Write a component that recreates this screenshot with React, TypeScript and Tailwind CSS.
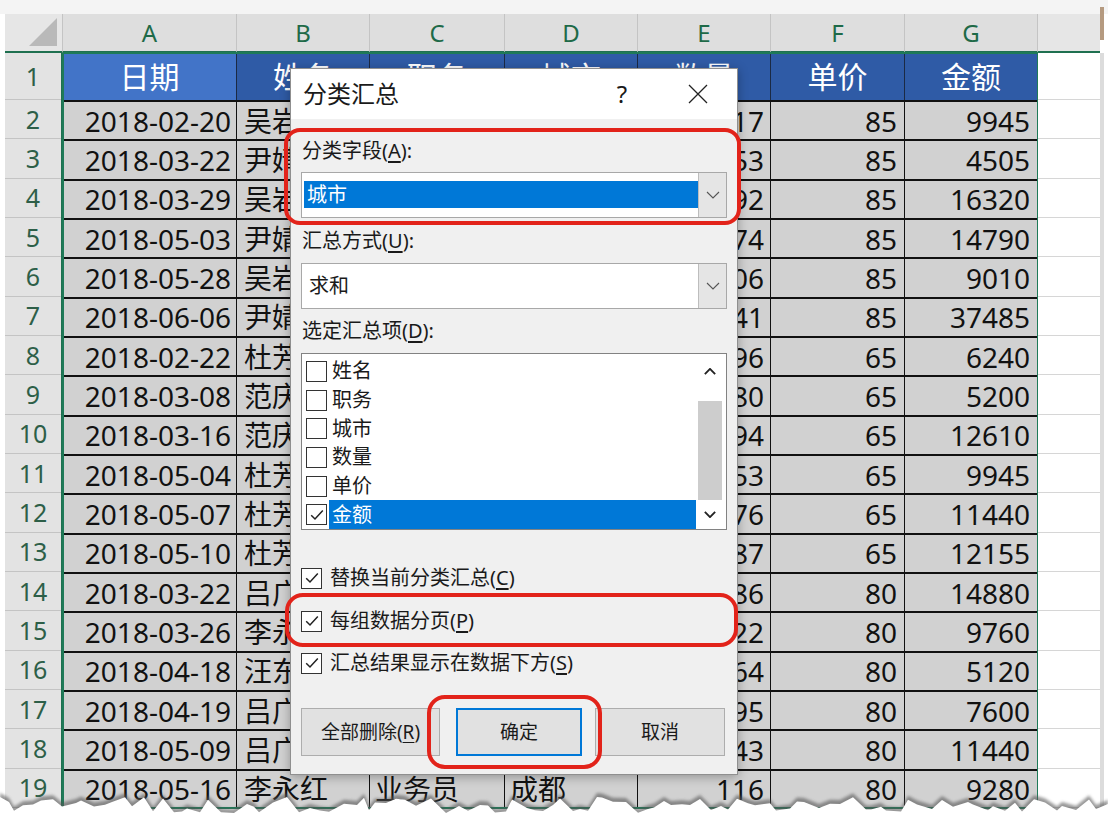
import React from 'react';

const cols = [
  { key: 'A', w: 'w-[174px]' },
  { key: 'B', w: 'w-[133px]' },
  { key: 'C', w: 'w-[135px]' },
  { key: 'D', w: 'w-[133px]' },
  { key: 'E', w: 'w-[133px]' },
  { key: 'F', w: 'w-[134px]' },
  { key: 'G', w: 'w-[133px]' },
];

const headers = ['日期', '姓名', '职务', '城市', '数量', '单价', '金额'];

// C and D of rows 2-18 sit fully under the dialog, so they are left blank
const rows: string[][] = [
  ['2018-02-20', '吴岩峰', '', '', '117', '85', '9945'],
  ['2018-03-22', '尹婧', '', '', '53', '85', '4505'],
  ['2018-03-29', '吴岩峰', '', '', '192', '85', '16320'],
  ['2018-05-03', '尹婧', '', '', '174', '85', '14790'],
  ['2018-05-28', '吴岩峰', '', '', '106', '85', '9010'],
  ['2018-06-06', '尹婧', '', '', '441', '85', '37485'],
  ['2018-02-22', '杜芳', '', '', '96', '65', '6240'],
  ['2018-03-08', '范庆', '', '', '80', '65', '5200'],
  ['2018-03-16', '范庆', '', '', '194', '65', '12610'],
  ['2018-05-04', '杜芳', '', '', '153', '65', '9945'],
  ['2018-05-07', '杜芳', '', '', '176', '65', '11440'],
  ['2018-05-10', '杜芳', '', '', '187', '65', '12155'],
  ['2018-03-22', '吕广', '', '', '186', '80', '14880'],
  ['2018-03-26', '李永红', '', '', '122', '80', '9760'],
  ['2018-04-18', '汪东', '', '', '64', '80', '5120'],
  ['2018-04-19', '吕广', '', '', '95', '80', '7600'],
  ['2018-05-09', '吕广', '', '', '143', '80', '11440'],
  ['2018-05-16', '李永红', '业务员', '成都', '116', '80', '9280'],
];

const align = ['justify-end pr-[5px]', 'justify-start pl-[7px]', 'justify-start pl-[5px]', 'justify-start pl-[5px]', 'justify-end pr-[6px]', 'justify-end pr-[7px]', 'justify-end pr-[7px]'];

function Check({ checked }: { checked: boolean }) {
  return (
    <span className="flex h-[21px] w-[21px] shrink-0 items-center justify-center border-[1.5px] border-[#333] bg-white">
      {checked && (
        <svg viewBox="0 0 16 16" className="h-[16px] w-[16px]">
          <path d="M2.2 8.2 L6 12 L13.8 3.4" fill="none" stroke="#222" strokeWidth="1.5" />
        </svg>
      )}
    </span>
  );
}

function Chevron({ up = false, bold = false }: { up?: boolean; bold?: boolean }) {
  return (
    <svg viewBox="0 0 14 8" className={bold ? 'h-[7px] w-[12px]' : 'h-[8px] w-[14px]'}>
      <polyline
        points={up ? '1,7 7,1 13,7' : '1,1 7,7 13,1'}
        fill="none"
        stroke={bold ? '#222' : '#555'}
        strokeWidth={bold ? 2.2 : 1.1}
      />
    </svg>
  );
}

function Key({ k }: { k: string }) {
  return (
    <>
      (<span className="underline underline-offset-[3px]">{k}</span>)
    </>
  );
}

function TornEdge() {
  let seed = 11;
  const rnd = () => {
    seed = (seed * 16807) % 2147483647;
    return seed / 2147483647;
  };
  const pts: string[] = [];
  for (let x = 0; x <= 1108; x += 5 + Math.floor(rnd() * 11)) {
    const y = 13 + rnd() * 16;
    pts.push(`${x},${y.toFixed(1)}`);
  }
  pts.push('1108,20');
  const d = `M0,60 L0,20 L${pts.join(' L')} L1108,60 Z`;
  return (
    <svg className="pointer-events-none absolute bottom-0 left-0" width="1108" height="50" viewBox="0 0 1108 50">
      <defs>
        <filter id="tornBlur" x="-5%" y="-50%" width="110%" height="200%">
          <feGaussianBlur stdDeviation="1.4" />
        </filter>
      </defs>
      <path d={d} transform="translate(0,-4)" fill="#555" opacity="0.6" filter="url(#tornBlur)" />
      <path d={d} fill="#fff" />
    </svg>
  );
}

function Sheet() {
  return (
    <div className="flex flex-col pl-[5px]">
      {/* column headers */}
      <div className="flex h-[39px]">
        <div className="relative w-[58px] shrink-0 border-b-2 border-r border-b-[#1f7050] border-r-[#c4c4c4] bg-[#e6e6e6]">
          <svg className="absolute bottom-[5px] right-[5px]" width="28" height="28" viewBox="0 0 28 28">
            <polygon points="28,0 28,28 0,28" fill="#b9b9b9" />
          </svg>
        </div>
        {cols.map((c) => (
          <div
            key={c.key}
            className={`${c.w} flex shrink-0 items-center justify-center border-b-2 border-r border-b-[#1f7050] border-r-[#c4c4c4] bg-[#dedede] text-[24px] text-[#1e6a48]`}
          >
            {c.key}
          </div>
        ))}
        <div className="w-[62px] shrink-0 border-b-2 border-b-[#1f7050] bg-[#e6e6e6]" />
        <div className="mt-[-7px] h-[33px] w-[4px] bg-[#b59a80]" />
      </div>

      <div className="flex">
        {/* row headers */}
        <div className="flex w-[58px] shrink-0 flex-col border-r-2 border-r-[#1f7050] bg-[#e3e3e3]">
          <div className="flex h-[47px] items-center justify-center border-b border-[#c4c4c4] text-[25px] text-[#2d5f48]">1</div>
          {rows.map((_, i) => (
            <div key={i} className="flex h-[39.33px] items-center justify-center border-b border-[#c4c4c4] text-[25px] text-[#2d5f48]">
              {i + 2}
            </div>
          ))}
        </div>

        {/* selected range A1:G19 */}
        <div className="flex flex-col outline-2 outline-offset-[-1px] outline-[#1f7a58]">
          <div className="flex h-[47px]">
            {cols.map((c, j) => (
              <div
                key={c.key}
                className={`${c.w} flex shrink-0 items-center justify-center border-r-[1.5px] border-[#1b2a44] text-[30px] text-white ${
                  j === 0 ? 'bg-[#4274c8]' : 'bg-[#2f5ba6]'
                }`}
              >
                {headers[j]}
              </div>
            ))}
          </div>
          {rows.map((r, i) => (
            <div key={i} className="flex h-[39.33px]">
              {cols.map((c, j) => (
                <div
                  key={c.key}
                  className={`${c.w} ${align[j]} flex shrink-0 items-center overflow-hidden whitespace-nowrap border-t-2 border-r-[1.5px] border-[#111] bg-[#d1d1d1] text-[28px] text-[#111]`}
                >
                  {r[j]}
                </div>
              ))}
            </div>
          ))}
        </div>

        {/* column H */}
        <div className="flex w-[62px] shrink-0 flex-col bg-white">
          <div className="h-[47px] border-b border-[#d6d6d6]" />
          {rows.map((_, i) => (
            <div key={i} className="h-[39.33px] border-b border-[#d6d6d6]" />
          ))}
        </div>
        <div className="w-[4px] bg-[#dcdcdc]" />
      </div>
    </div>
  );
}

function Dialog() {
  const items = ['姓名', '职务', '城市', '数量', '单价', '金额'];
  return (
    <div className="absolute left-[290px] top-[68px] flex h-[707px] w-[448px] flex-col border border-[#8f8f8f] bg-[#f0f0f0] text-[20px] text-[#1a1a1a] shadow-[0_2px_10px_rgba(0,0,0,0.3)]">
      <div className="flex h-[50px] shrink-0 items-center bg-white pl-[12px] pr-[29px]">
        <span className="text-[24px]">分类汇总</span>
        <span className="ml-auto w-[20px] text-center text-[24px]">?</span>
        <svg className="ml-[56px]" width="20" height="20" viewBox="0 0 20 20">
          <path d="M1 1 L19 19 M19 1 L1 19" stroke="#222" strokeWidth="1.3" />
        </svg>
      </div>

      <div className="flex flex-col px-[10px]">
        <div className="mt-[20px] h-[24px] pl-[1px] leading-[24px]">
          分类字段<Key k="A" />:
        </div>
        <div className="mt-[9px] flex h-[46px] border border-[#a8a8a8] bg-white">
          <div className="flex-1 pl-[2px] pt-[8px]">
            <div className="flex h-[27px] items-center bg-[#0078d7] pl-[3px] text-white">城市</div>
          </div>
          <div className="flex w-[28px] items-center justify-center border-l border-[#bdbdbd] bg-[#e5e5e5]">
            <Chevron />
          </div>
        </div>

        <div className="mt-[11px] h-[24px] pl-[1px] leading-[24px]">
          汇总方式<Key k="U" />:
        </div>
        <div className="mt-[10px] flex h-[46px] border border-[#a8a8a8] bg-white">
          <div className="flex flex-1 items-center pl-[7px]">求和</div>
          <div className="flex w-[28px] items-center justify-center border-l border-[#bdbdbd] bg-[#e5e5e5]">
            <Chevron />
          </div>
        </div>

        <div className="mt-[10px] h-[24px] pl-[1px] leading-[24px]">
          选定汇总项<Key k="D" />:
        </div>
        <div className="mt-[10px] flex h-[177px] border border-[#828282] bg-white">
          <div className="flex flex-1 flex-col pt-[3px]">
            {items.map((it, i) => {
              const sel = i === items.length - 1;
              return (
                <div key={it} className="flex h-[29px] items-center pl-[4px]">
                  <Check checked={sel} />
                  <div className={`ml-[2px] flex h-full flex-1 items-center pl-[3px] ${sel ? 'bg-[#0078d7] text-white' : ''}`}>{it}</div>
                </div>
              );
            })}
          </div>
          <div className="mr-[2px] flex w-[28px] flex-col">
            <div className="flex h-[34px] items-center justify-center">
              <Chevron up bold />
            </div>
            <div className="mx-[2px] mt-[13px] h-[99px] bg-[#cdcdcd]" />
            <div className="flex flex-1 items-center justify-center">
              <Chevron bold />
            </div>
          </div>
        </div>

        <div className="mt-[33px] flex h-[30px] items-center gap-[8px]">
          <Check checked />
          <span>
            替换当前分类汇总<Key k="C" />
          </span>
        </div>
        <div className="mt-[13px] flex h-[30px] items-center gap-[8px]">
          <Check checked />
          <span>
            每组数据分页<Key k="P" />
          </span>
        </div>
        <div className="mt-[12px] flex h-[30px] items-center gap-[8px]">
          <Check checked />
          <span>
            汇总结果显示在数据下方<Key k="S" />
          </span>
        </div>

        <div className="mt-[30px] flex h-[48px] text-[19px]">
          <div className="flex w-[139px] items-center justify-center border border-[#adadad] bg-[#e1e1e1]">
            全部删除<Key k="R" />
          </div>
          <div className="ml-[16px] flex w-[126px] items-center justify-center border-2 border-[#0078d7] bg-[#e1e1e1]">确定</div>
          <div className="ml-[13px] flex w-[130px] items-center justify-center border border-[#adadad] bg-[#e1e1e1]">取消</div>
        </div>
      </div>
    </div>
  );
}

export default function App() {
  return (
    <div className="relative h-[834px] w-[1108px] overflow-hidden bg-white font-['Noto_Sans','Noto_Sans_CJK_SC',sans-serif] leading-none">
      <div className="h-[14px] bg-[#f4f4f4]" />
      <Sheet />
      <Dialog />

      {/* red annotation frames */}
      <div className="pointer-events-none absolute left-[284px] top-[128px] h-[97px] w-[457px] rounded-[16px] border-[4px] border-[#e2231a]" />
      <div className="pointer-events-none absolute left-[285px] top-[593px] h-[54px] w-[453px] rounded-[18px] border-[4px] border-[#e2231a]" />
      <div className="pointer-events-none absolute left-[427px] top-[695px] h-[74px] w-[175px] rounded-[18px] border-[4px] border-[#e2231a]" />

      <TornEdge />
    </div>
  );
}
